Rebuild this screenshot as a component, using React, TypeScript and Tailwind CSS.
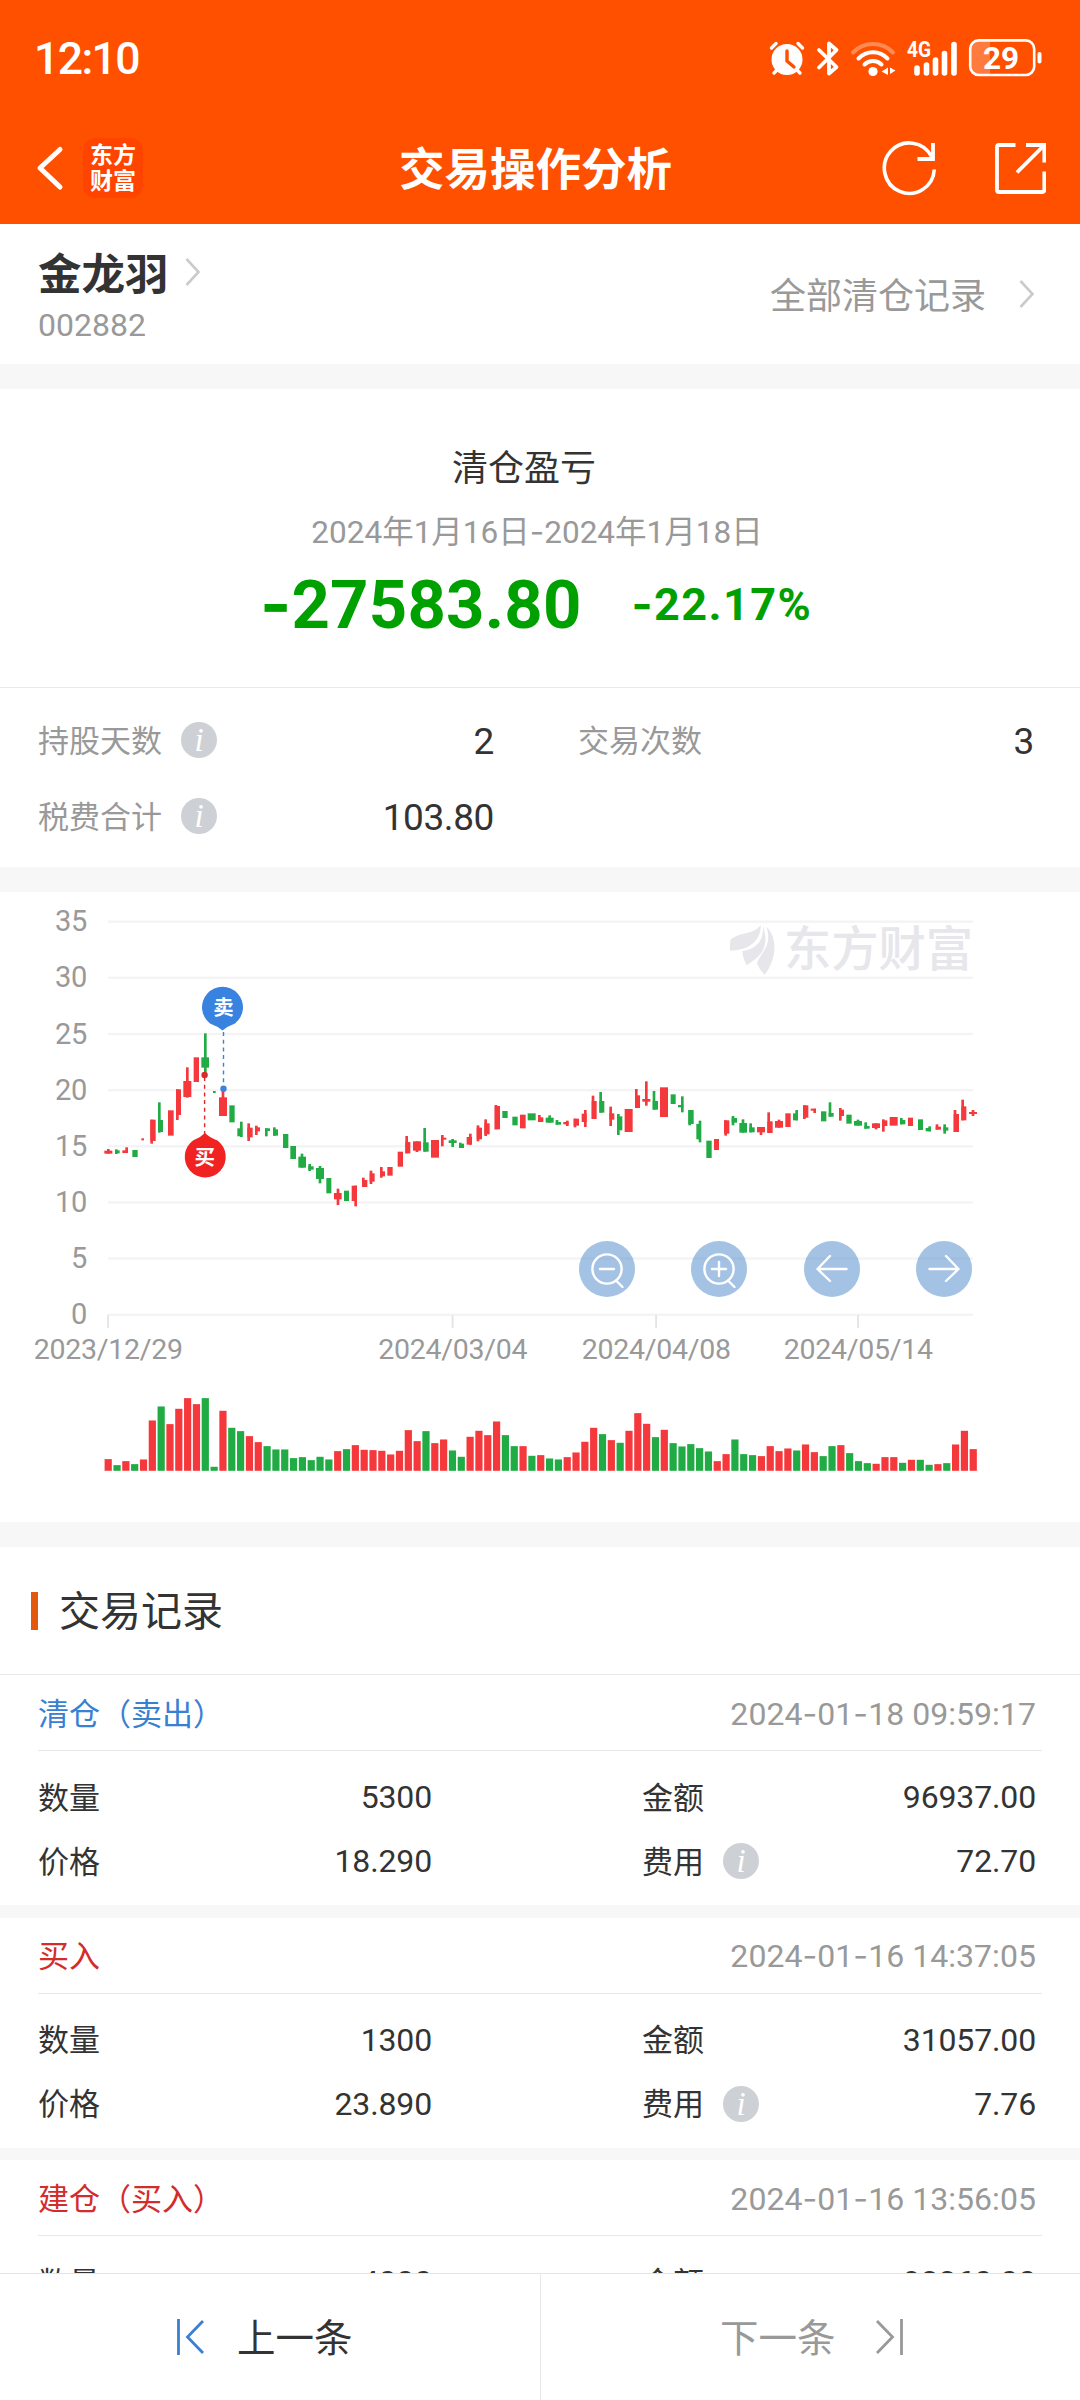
import { Fragment, type ReactNode } from "react";
import clsx from "clsx";

// [direction, bodyLeft, bodyRight, bodyTop, bodyBottom, wickX?, wickTop?, wickBottom?]
type Candle = ["r" | "g", ...number[]];

type CandleGroup = { x: number; y: number; items: Candle[] };

type TradeRecord = {
  title: string;
  side: "buy" | "sell";
  time: string;
  quantity: string;
  amount: string;
  price: string;
  fee: string;
};

const RED = "#f5383c";
const GREEN = "#21ab45";

// Each group is plotted in thirds of a pixel from its own origin.
const CANDLES: CandleGroup[] = [
  {
    x: 80,
    y: 960,
    items: [
      ["r", 73, 97, 572, 581, 85, 567, 581],
      ["g", 105, 119, 571, 580, 109, 568, 582],
      ["r", 127, 144, 571, 579, 140, 562, 579],
      ["g", 157, 173, 570, 591],
      ["r", 184, 192, 535, 541],
      ["r", 211, 227, 479, 543, 215, 479, 551],
      ["g", 234, 249, 480, 516, 238, 427, 518],
      ["r", 264, 281, 451, 527],
      ["r", 288, 303, 388, 465, 292, 388, 480],
      ["r", 310, 334, 363, 411, 322, 322, 413],
      ["r", 341, 357, 292, 366],
      ["g", 364, 387, 292, 323, 376, 220, 340],
      ["g", 399, 407, 393, 399],
      ["r", 417, 441, 412, 468, 429, 393, 468],
      ["g", 448, 464, 436, 487],
      ["g", 472, 487, 505, 529, 484, 485, 531],
      ["r", 502, 518, 503, 532, 506, 490, 543],
      ["r", 525, 540, 502, 514, 529, 497, 525],
      ["g", 555, 570, 505, 513, 559, 505, 529],
      ["g", 579, 594, 508, 527, 583, 502, 527],
      ["g", 609, 625, 522, 564],
      ["g", 631, 648, 558, 597],
      ["g", 655, 678, 590, 623, 666, 581, 623],
      ["g", 685, 701, 619, 629, 689, 612, 633],
      ["g", 708, 732, 624, 657, 720, 618, 670],
      ["g", 739, 754, 654, 700],
      ["r", 762, 785, 699, 718, 774, 686, 735],
      ["g", 792, 807, 692, 723],
      ["r", 815, 831, 677, 723, 827, 677, 739],
      ["r", 846, 862, 660, 681, 850, 653, 681],
      ["r", 869, 884, 640, 665, 873, 632, 672],
      ["r", 900, 915, 634, 649, 904, 621, 653],
      ["r", 922, 938, 621, 647],
    ],
  },
  {
    x: 380,
    y: 1040,
    items: [
      ["r", 53, 69, 335, 380],
      ["r", 76, 91, 306, 340, 80, 288, 340],
      ["r", 99, 123, 304, 332, 111, 304, 336],
      ["g", 130, 146, 307, 335, 134, 264, 335],
      ["r", 153, 177, 300, 353],
      ["r", 183, 199, 293, 299, 187, 285, 319],
      ["g", 206, 230, 301, 309, 218, 297, 321],
      ["g", 237, 252, 311, 324, 241, 308, 324],
      ["r", 260, 276, 291, 314, 271, 281, 314],
      ["r", 290, 306, 263, 298, 294, 256, 304],
      ["r", 313, 329, 250, 283, 317, 238, 288],
      ["r", 344, 360, 198, 268, 348, 195, 268],
      ["g", 367, 383, 213, 234],
      ["g", 397, 413, 230, 256],
      ["r", 420, 437, 224, 265],
      ["g", 443, 467, 220, 241],
      ["r", 474, 490, 232, 246, 478, 225, 246],
      ["g", 497, 521, 233, 248, 509, 226, 248],
      ["g", 527, 543, 246, 254, 531, 240, 254],
      ["r", 550, 566, 246, 253, 562, 242, 258],
      ["r", 581, 597, 236, 257, 585, 236, 262],
      ["r", 605, 620, 221, 246, 616, 210, 261],
      ["r", 635, 650, 183, 237, 639, 167, 237],
      ["g", 658, 673, 183, 218, 662, 156, 218],
      ["r", 688, 703, 220, 239, 692, 200, 258],
      ["g", 711, 727, 229, 271, 715, 222, 285],
      ["r", 734, 758, 207, 276],
      ["r", 765, 780, 166, 204, 769, 147, 204],
      ["r", 787, 811, 177, 185, 799, 124, 197],
      ["g", 818, 834, 183, 209, 822, 153, 209],
      ["r", 840, 864, 142, 231],
      ["g", 872, 887, 163, 192],
      ["g", 894, 910, 195, 202, 907, 169, 217],
      ["g", 925, 941, 210, 252, 929, 210, 256],
      ["g", 949, 963, 252, 298, 960, 242, 307],
    ],
  },
  {
    x: 680,
    y: 1040,
    items: [
      ["g", 79, 95, 302, 354],
      ["r", 102, 117, 297, 330],
      ["r", 132, 148, 241, 281, 137, 241, 287],
      ["g", 155, 171, 234, 248, 159, 228, 256],
      ["g", 178, 201, 249, 278, 189, 238, 278],
      ["g", 208, 224, 262, 277, 212, 250, 277],
      ["r", 231, 255, 261, 277, 243, 261, 285],
      ["r", 262, 278, 244, 279, 266, 217, 279],
      ["r", 285, 309, 243, 263, 297, 239, 263],
      ["r", 316, 332, 220, 261],
      ["g", 339, 354, 220, 241, 350, 210, 241],
      ["r", 369, 385, 196, 233, 373, 196, 237],
      ["r", 392, 408, 206, 212, 404, 206, 219],
      ["g", 423, 439, 214, 244],
      ["g", 446, 461, 219, 230, 450, 187, 230],
      ["r", 477, 492, 209, 228, 481, 204, 242],
      ["g", 499, 515, 224, 251],
      ["g", 522, 546, 243, 257, 534, 239, 257],
      ["g", 553, 569, 258, 266, 557, 247, 266],
      ["r", 576, 600, 250, 264, 588, 250, 268],
      ["r", 606, 622, 241, 258, 610, 238, 275],
      ["r", 629, 653, 231, 257],
      ["g", 660, 676, 240, 253, 664, 234, 253],
      ["r", 684, 699, 233, 258],
      ["g", 714, 729, 238, 270],
      ["g", 737, 753, 264, 274, 749, 259, 274],
      ["r", 767, 783, 260, 269, 771, 253, 269],
      ["g", 790, 805, 262, 272, 794, 253, 281],
      ["r", 821, 837, 222, 276, 825, 210, 276],
      ["r", 844, 859, 199, 241, 848, 179, 241],
      ["r", 867, 891, 216, 222, 879, 210, 228],
    ],
  },
];

// Volume bars, heights in thirds of a pixel.
const VOLUMES = [
  35, 17, 29, 20, 34, 151, 193, 140, 186, 218, 200, 218, 12, 180, 129, 119, 104,
  86, 74, 64, 64, 38, 41, 32, 42, 34, 59, 65, 77, 63, 62, 60, 49, 60, 122, 89,
  119, 83, 94, 61, 42, 102, 120, 107, 148, 107, 74, 74, 45, 47, 37, 34, 41, 55,
  87, 129, 110, 92, 84, 120, 173, 141, 101, 123, 83, 73, 80, 68, 58, 29, 50, 94,
  50, 47, 44, 74, 59, 67, 61, 79, 56, 44, 74, 77, 53, 29, 23, 21, 41, 41, 24,
  33, 33, 18, 20, 23, 79, 120, 65,
];

const DIRECTIONS = CANDLES.flatMap((g) => g.items.map((c) => c[0]));

const PRICE_TICKS = [35, 30, 25, 20, 15, 10, 5, 0];

const DATE_TICKS = [
  { x: 108, label: "2023/12/29" },
  { x: 452.5, label: "2024/03/04" },
  { x: 656, label: "2024/04/08" },
  { x: 858, label: "2024/05/14" },
];

const RECORDS: TradeRecord[] = [
  {
    title: "清仓（卖出）",
    side: "sell",
    time: "2024-01-18 09:59:17",
    quantity: "5300",
    amount: "96937.00",
    price: "18.290",
    fee: "72.70",
  },
  {
    title: "买入",
    side: "buy",
    time: "2024-01-16 14:37:05",
    quantity: "1300",
    amount: "31057.00",
    price: "23.890",
    fee: "7.76",
  },
  {
    title: "建仓（买入）",
    side: "buy",
    time: "2024-01-16 13:56:05",
    quantity: "4000",
    amount: "93360.00",
    price: "23.340",
    fee: "23.34",
  },
];

// Roboto's hyphen is very short, so dashes are set in Inter.
function Dashed({ children }: { children: string }) {
  const parts = children.split("-");
  return (
    <span>
      {parts.map((part, i) => (
        <Fragment key={i}>
          {i > 0 ? <span className="font-['Inter']">-</span> : null}
          {part}
        </Fragment>
      ))}
    </span>
  );
}

function Gap() {
  return <div className="h-[25px] shrink-0 bg-[#f7f7f7]" />;
}

function Chevron() {
  return (
    <svg width="16" height="30" viewBox="0 0 16 30" fill="none">
      <path d="M1.500 2 L13.500 15 L1.500 28" stroke="#cbcbcb" strokeWidth="2.6" />
    </svg>
  );
}

function InfoIcon() {
  return (
    <span className="flex size-9 shrink-0 items-center justify-center rounded-full bg-[#cdd0d5]">
      <span className="pt-px font-['Liberation_Serif'] text-[33px] italic leading-none text-white">
        i
      </span>
    </span>
  );
}

function StatusBar() {
  return (
    <div className="flex h-[112px] items-center justify-between pl-[34px] pr-[37px] pt-1">
      <span className="pt-[3px] text-[44.5px] font-medium leading-none tracking-[-1.6px]">
        12:10
      </span>
      <svg width="275" height="42" viewBox="768 37 275 42" fill="none">
        <g stroke="#fff" strokeLinecap="round">
          <circle cx="787" cy="59.5" r="15.5" fill="#fff" stroke="none" />
          <path
            d="M771.5 48 L776 43.5 M802.5 48 L798 43.5 M774 73 L778 69 M800 73 L796 69"
            strokeWidth="3.4"
          />
          <path d="M787 51 V61 L794 67" stroke="#ff5000" strokeWidth="3.4" />
          <path
            d="M819 50 L836.5 67 L829 73.5 V43.5 L836.5 50 L819 67.5"
            strokeWidth="3.8"
            strokeLinejoin="round"
          />
          <path
            d="M853 52.5 A28 28 0 0 1 893 52.5"
            stroke="#ff8a52"
            strokeWidth="4"
          />
          <path
            d="M858.5 58.5 A20 20 0 0 1 887.5 58.5 M864.5 64.5 A12 12 0 0 1 881.5 64.5"
            strokeWidth="4"
          />
          <circle cx="873" cy="71.5" r="4.6" fill="#fff" stroke="none" />
          <path
            d="M888 67.5 V75 L881.5 71.5 Z M889.5 66.5 V74 M890 67.5 L895.5 70.5 L890 74 Z"
            fill="#fff"
            stroke="none"
          />
          <path
            d="M917 68 V73 M926.5 65 V73 M935.5 60 V73 M944.5 53.5 V73 M954 44.5 V73"
            strokeWidth="5.6"
          />
        </g>
        <text
          x="907"
          y="57"
          fill="#fff"
          fontSize="22"
          fontWeight="700"
          textLength="24"
          lengthAdjust="spacingAndGlyphs"
        >
          4G
        </text>
        <path d="M971 46 Q971 41 977 41 H990 V74.5 H977 Q971 74.5 971 69 Z" fill="#ff7a3d" />
        <rect x="970.2" y="40.4" width="64" height="34.6" rx="8.5" stroke="#fff" strokeWidth="2.6" />
        <path d="M1039.5 54 V61.5" stroke="#fff" strokeWidth="4" strokeLinecap="round" />
        <text x="1001" y="68.500" fill="#fff" fontSize="31.500" fontWeight="700" textAnchor="middle">
          29
        </text>
      </svg>
    </div>
  );
}

function NavBar() {
  return (
    <div className="flex h-[112px] items-center px-[33px]">
      <div className="flex flex-1 items-center gap-[18px]">
        <svg width="32" height="48" viewBox="34 145 32 48" fill="none">
          <path
            d="M61 150.5 L41 169 L61 188"
            stroke="#fff"
            strokeWidth="5"
            strokeLinecap="round"
            strokeLinejoin="round"
          />
        </svg>
        <div className="flex size-[60px] flex-col items-center justify-center rounded-xl bg-[#ff4400] pt-px text-[23px] font-bold leading-[26px]">
          <span>东方</span>
          <span>财富</span>
        </div>
      </div>
      <h1 className="mr-[8px] pt-[5px] text-[45.5px] font-bold leading-none">
        交易操作分析
      </h1>
      <div className="flex flex-1 items-center justify-end gap-[55px] pr-px">
        <svg width="58" height="56" viewBox="881 139 58 56" fill="none">
          <path
            d="M934.3 168.5 A25 25.2 0 1 1 931.5 155.5"
            stroke="#fff"
            strokeWidth="3.6"
          />
          <path d="M933 142 V158 H917.5" stroke="#fff" strokeWidth="3.8" />
        </svg>
        <svg width="52" height="54" viewBox="994 141 52 54" fill="none" stroke="#fff">
          <path
            d="M1015.5 145 H999 Q997 145 997 147 V190 Q997 192 999 192 H1042 Q1044.300 192 1044.300 190 V171.500"
            strokeWidth="3.8"
          />
          <path d="M1026 145 H1044.300 V162.500" strokeWidth="3.8" />
          <path d="M1043.500 146 L1017 172.500" strokeWidth="3.8" />
        </svg>
      </div>
    </div>
  );
}

function StockHeader() {
  return (
    <div className="flex h-[140px] shrink-0 justify-between pl-[38px] pr-[45px]">
      <div className="flex flex-col pt-[28px]">
        <div className="flex items-start gap-[16px]">
          <span className="pt-[2px] text-[43.5px] font-bold leading-none">
            金龙羽
          </span>
          <span className="pt-[5px]">
            <Chevron />
          </span>
        </div>
        <span className="mt-[11px] text-[32px] leading-none text-[#999]">
          002882
        </span>
      </div>
      <button type="button" className="flex items-center gap-[33px]">
        <span className="pt-[5px] text-[36px] leading-none text-[#999]">
          全部清仓记录
        </span>
        <Chevron />
      </button>
    </div>
  );
}

function Stat({
  label,
  value,
  info = false,
}: {
  label: string;
  value: string;
  info?: boolean;
}) {
  return (
    <div className="flex h-[76px] items-center">
      <span className="pt-[2px] text-[31px] leading-none text-[#999]">
        {label}
      </span>
      {info ? (
        <span className="ml-[19px]">
          <InfoIcon />
        </span>
      ) : null}
      <span className="ml-auto pt-[2px] text-[37px] leading-none tracking-[-0.4px]">
        {value}
      </span>
    </div>
  );
}

function Summary() {
  return (
    <section className="flex h-[478px] shrink-0 flex-col">
      <div className="flex h-[299px] flex-col items-center border-b border-[#e8e8e8] pr-[8px] pt-[62px]">
        <span className="pr-[24px] text-[36px] leading-none">清仓盈亏</span>
        <span className="mt-[29px] pl-[2px] text-[31.5px] leading-none text-[#999]">
          <Dashed>2024年1月16日-2024年1月18日</Dashed>
        </span>
        <div className="mt-[21px] flex items-center gap-[50px] font-bold leading-none text-[#00a000]">
          <span className="text-[67px] tracking-[0.2px]">
            <Dashed>-27583.80</Dashed>
          </span>
          <span className="text-[45px] tracking-[1.4px]">
            <Dashed>-22.17%</Dashed>
          </span>
        </div>
      </div>
      <div className="flex pl-[38px] pr-[46px] pt-[14px]">
        <div className="w-[456px]">
          <Stat label="持股天数" value="2" info />
          <Stat label="税费合计" value="103.80" info />
        </div>
        <div className="ml-[84px] flex-1">
          <Stat label="交易次数" value="3" />
        </div>
      </div>
    </section>
  );
}

function ChartButton({ label, children }: { label: string; children: ReactNode }) {
  return (
    <button
      type="button"
      aria-label={label}
      className="size-14 rounded-full bg-[#4a85c9]/50"
    >
      <svg
        viewBox="0 0 56 56"
        fill="none"
        stroke="#fff"
        strokeWidth="2.4"
        strokeLinecap="round"
        strokeLinejoin="round"
      >
        {children}
      </svg>
    </button>
  );
}

function PriceChart() {
  return (
    <section className="relative h-[630px] shrink-0">
      <svg width="1080" height="630" viewBox="0 892 1080 630">
        {PRICE_TICKS.map((tick, i) => (
          <g key={tick}>
            <rect x="108" y={920.5 + i * 56.15} width="865" height="2.4" fill="#f4f4f5" />
            <text
              x="87"
              y={931.3 + i * 56.15}
              textAnchor="end"
              fontSize="29"
              letterSpacing="-0.3"
              fill="#999"
            >
              {tick}
            </text>
          </g>
        ))}
        {DATE_TICKS.map(({ x, label }) => (
          <g key={label}>
            <rect x={x - 0.8} y="1315" width="1.8" height="13" fill="#e4e4e6" />
            <text
              x={x + 0.3}
              y="1359"
              textAnchor="middle"
              fontSize="28.5"
              letterSpacing="-0.25"
              fill="#999"
            >
              {label}
            </text>
          </g>
        ))}

        <g fill="#e6e6eb">
          <g transform="translate(700 900) scale(0.3333)">
            <path d="M182 75 C160 105 122 95 93 118 Q89 125 90 152 C134 152 184 130 182 75 Z" />
            <path d="M189 77 C193 125 165 148 127 153 Q128 172 140 196 C176 170 212 150 189 77 Z" />
            <path d="M199 80 C220 140 178 162 171 190 Q178 210 194 224 C228 180 236 115 199 80 Z" />
          </g>
          <text
            x="784"
            y="966"
            fontSize="47.5"
            fontWeight="500"
            textLength="189"
            lengthAdjust="spacingAndGlyphs"
          >
            东方财富
          </text>
        </g>

        {CANDLES.map((group) => (
          <g
            key={group.x}
            transform={`translate(${group.x} ${group.y}) scale(0.33333)`}
          >
            {group.items.map(([dir, x0, x1, top, bottom, wx, wt, wb]) => (
              <g key={x0} fill={dir === "r" ? RED : GREEN}>
                <rect x={x0} y={top} width={x1 - x0} height={bottom - top} />
                {wx ? <rect x={wx - 4} y={wt} width="8" height={wb - wt} /> : null}
              </g>
            ))}
          </g>
        ))}

        {VOLUMES.map((v, i) => (
          <rect
            key={i}
            x={104.6 + i * 8.827}
            y={1470.8 - v / 3}
            width="7.2"
            height={v / 3}
            fill={DIRECTIONS[i] === "r" ? RED : GREEN}
          />
        ))}

        <path d="M223.5 1032 V1087" stroke="#3983e0" strokeWidth="1.4" strokeDasharray="4 3.7" />
        <circle cx="223.5" cy="1088.7" r="3.2" fill="#3983e0" />
        <path
          d="M222.5 1030.5 Q217 1026 210 1023.5 A20.5 20.5 0 1 1 235 1023.5 Q228 1026 222.5 1030.5 Z"
          fill="#3983e0"
        />
        <text x="223.5" y="1015" fontSize="20.5" fontWeight="700" fill="#fff" textAnchor="middle">
          卖
        </text>

        <path d="M204.6 1077 V1134" stroke="#dc2a2c" strokeWidth="1.4" strokeDasharray="4 3.7" />
        <circle cx="204.6" cy="1075" r="3.2" fill="#dc2a2c" />
        <path
          d="M205 1133 Q210 1138 217.5 1140.5 A20.5 20.5 0 1 1 193 1140.5 Q200 1138 205 1133 Z"
          fill="#f02222"
        />
        <text x="204.8" y="1164.5" fontSize="20.5" fontWeight="700" fill="#fff" textAnchor="middle">
          买
        </text>
      </svg>

      <div className="absolute right-[108px] top-[349px] flex gap-[56.5px]">
        <ChartButton label="缩小">
          <circle cx="28" cy="28" r="14.6" />
          <path d="M21 28 H35 M37 39.5 L43.5 46" />
        </ChartButton>
        <ChartButton label="放大">
          <circle cx="28" cy="28" r="14.6" />
          <path d="M21 28 H35 M28 21 V35 M37 39.5 L43.5 46" />
        </ChartButton>
        <ChartButton label="向左">
          <path d="M42.5 28 H13.5 M26 15 L13.5 28 L26 40" />
        </ChartButton>
        <ChartButton label="向右">
          <path d="M13.5 28 H42.5 M30 15 L42.5 28 L30 40" />
        </ChartButton>
      </div>
    </section>
  );
}

function RecordCard({ record }: { record: TradeRecord }) {
  return (
    <article className="h-[230px] shrink-0 bg-white">
      <div className="mx-[38px] flex h-[76px] items-center justify-between border-b border-[#e8e8e8] pr-[6px] pt-[2px]">
        <span
          className={clsx(
            "pt-px text-[31px] leading-none",
            record.side === "sell" ? "text-[#3a80d2]" : "text-[#d42b2b]",
          )}
        >
          {record.title}
        </span>
        <span className="text-[32px] leading-none tracking-[0.05px] text-[#999]">
          <Dashed>{record.time}</Dashed>
        </span>
      </div>
      <div className="flex justify-between pl-[38px] pr-[44px] pt-[14px] text-[31px] leading-none">
        <div className="w-[394px]">
          <div className="flex h-16 items-center justify-between">
            <span className="pt-[2px]">数量</span>
            <span className="text-[32px] tracking-[-0.15px]">{record.quantity}</span>
          </div>
          <div className="flex h-16 items-center justify-between">
            <span className="pt-[2px]">价格</span>
            <span className="text-[32px] tracking-[-0.15px]">{record.price}</span>
          </div>
        </div>
        <div className="w-[394px]">
          <div className="flex h-16 items-center justify-between">
            <span className="pt-[2px]">金额</span>
            <span className="text-[32px] tracking-[-0.15px]">{record.amount}</span>
          </div>
          <div className="flex h-16 items-center">
            <span className="mr-[19px] pt-[2px]">费用</span>
            <InfoIcon />
            <span className="ml-auto text-[32px] tracking-[-0.15px]">
              {record.fee}
            </span>
          </div>
        </div>
      </div>
    </article>
  );
}

function Pager() {
  return (
    <footer className="flex h-[127px] shrink-0 border-t border-[#e5e5e5] bg-white text-[38.5px] leading-none">
      <button
        type="button"
        className="flex w-[541px] items-center gap-[32px] border-r border-[#e8e8e8] pl-[176px]"
      >
        <svg width="29" height="38" viewBox="0 0 29 38" fill="none" stroke="#3a80d2" strokeWidth="2.8">
          <path d="M2.5 1 V37 M27 3 L11.5 19 L27 35" />
        </svg>
        <span className="pt-[4px]">上一条</span>
      </button>
      <button
        type="button"
        className="flex flex-1 items-center gap-[39px] pl-[179px] text-[#999]"
      >
        <span className="pt-[4px]">下一条</span>
        <svg width="29" height="38" viewBox="0 0 29 38" fill="none" stroke="#999" strokeWidth="2.8">
          <path d="M26.5 1 V37 M2 3 L17.5 19 L2 35" />
        </svg>
      </button>
    </footer>
  );
}

export default function App() {
  return (
    <div className="flex h-[2400px] w-[1080px] flex-col overflow-hidden bg-white font-['Roboto','Noto_Sans_CJK_SC',sans-serif] text-[#333]">
      <header className="shrink-0 bg-[#ff5000] text-white">
        <StatusBar />
        <NavBar />
      </header>
      <main className="flex min-h-0 flex-1 flex-col overflow-hidden">
        <StockHeader />
        <Gap />
        <Summary />
        <Gap />
        <PriceChart />
        <Gap />
        <div className="flex h-[128px] shrink-0 items-center gap-[21px] border-b border-[#e8e8e8] pl-[31px]">
          <span className="h-[38px] w-[7px] bg-[#e4570f]" />
          <h2 className="pt-[3px] text-[41px] leading-none">交易记录</h2>
        </div>
        <div className="flex flex-col gap-[12.5px] bg-[#f7f7f7]">
          {RECORDS.map((record) => (
            <RecordCard key={record.time} record={record} />
          ))}
        </div>
      </main>
      <Pager />
    </div>
  );
}
